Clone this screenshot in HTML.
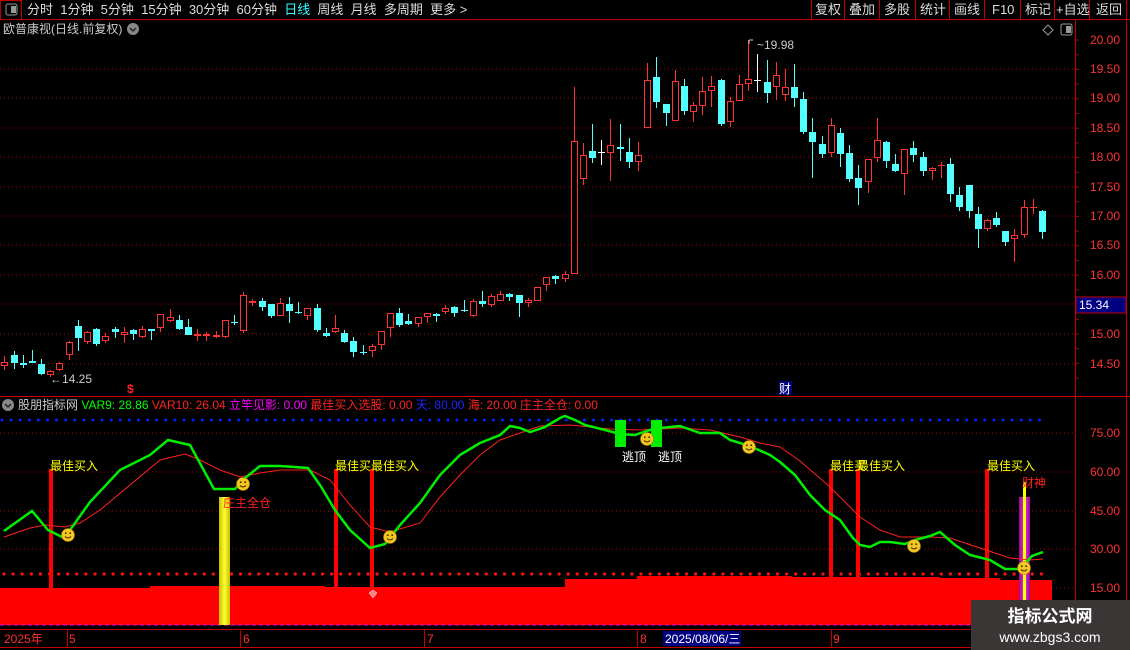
<!DOCTYPE html>
<html><head><meta charset="utf-8"><style>
html,body{margin:0;padding:0;background:#000;width:1130px;height:650px;overflow:hidden;font-family:"Liberation Sans","Noto Sans CJK SC",sans-serif;}
#c{position:absolute;left:0;top:0;}
.t{position:absolute;font-size:12px;white-space:nowrap;line-height:14px;}
</style></head><body>
<svg id="c" width="1130" height="650" xmlns="http://www.w3.org/2000/svg" font-family="Liberation Sans, Noto Sans CJK SC, sans-serif">
<line x1="0" y1="19.5" x2="1130" y2="19.5" stroke="#c00000"/>
<rect x="0.5" y="0.5" width="21" height="19" fill="none" stroke="#c00000"/>
<rect x="6" y="4" width="11" height="11" rx="2" fill="none" stroke="#999"/><rect x="11" y="6" width="5" height="7" fill="#999"/>
<g stroke="#c00000"><line x1="811.5" y1="0" x2="811.5" y2="19"/><line x1="844.5" y1="0" x2="844.5" y2="19"/><line x1="879.5" y1="0" x2="879.5" y2="19"/><line x1="915.5" y1="0" x2="915.5" y2="19"/><line x1="949.5" y1="0" x2="949.5" y2="19"/><line x1="984.5" y1="0" x2="984.5" y2="19"/><line x1="1020.5" y1="0" x2="1020.5" y2="19"/><line x1="1054.5" y1="0" x2="1054.5" y2="19"/><line x1="1089.5" y1="0" x2="1089.5" y2="19"/><line x1="1126.5" y1="0" x2="1126.5" y2="19"/></g>
<line x1="1075.5" y1="19" x2="1075.5" y2="630" stroke="#c00000"/>
<line x1="1126.5" y1="19" x2="1126.5" y2="650" stroke="#c00000"/>
<line x1="0" y1="396.5" x2="1130" y2="396.5" stroke="#d00000"/>
<line x1="0" y1="629.5" x2="1130" y2="629.5" stroke="#c00000"/>
<line x1="0" y1="647.5" x2="1130" y2="647.5" stroke="#c00000"/>
<g stroke="#a00000" stroke-dasharray="1 3">
<line x1="0" y1="69" x2="1074" y2="69"/><line x1="0" y1="98" x2="1074" y2="98"/><line x1="0" y1="128" x2="1074" y2="128"/><line x1="0" y1="157" x2="1074" y2="157"/><line x1="0" y1="187" x2="1074" y2="187"/><line x1="0" y1="216" x2="1074" y2="216"/><line x1="0" y1="245" x2="1074" y2="245"/><line x1="0" y1="275" x2="1074" y2="275"/><line x1="0" y1="304" x2="1074" y2="304"/><line x1="0" y1="334" x2="1074" y2="334"/><line x1="0" y1="364" x2="1074" y2="364"/>
<line x1="0" y1="433" x2="1074" y2="433"/><line x1="0" y1="472" x2="1074" y2="472"/><line x1="0" y1="511" x2="1074" y2="511"/><line x1="0" y1="549" x2="1074" y2="549"/><line x1="0" y1="588" x2="1074" y2="588"/>
</g>
<g stroke="#c00000" id="ticks"></g>
<g fill="#ff3333" font-size="12" text-anchor="end">
<text x="1120" y="44">20.00</text><text x="1120" y="73">19.50</text><text x="1120" y="102">19.00</text><text x="1120" y="132">18.50</text><text x="1120" y="161">18.00</text><text x="1120" y="191">17.50</text><text x="1120" y="220">17.00</text><text x="1120" y="249">16.50</text><text x="1120" y="279">16.00</text><text x="1120" y="308">15.50</text><text x="1120" y="338">15.00</text><text x="1120" y="368">14.50</text>
<text x="1120" y="437">75.00</text><text x="1120" y="476">60.00</text><text x="1120" y="515">45.00</text><text x="1120" y="553">30.00</text><text x="1120" y="592">15.00</text>
</g>
<rect x="1076" y="297" width="50" height="16" fill="#000080" stroke="#c00000"/>
<text x="1079" y="309" fill="#fff" font-size="12">15.34</text>
<g id="candles"></g>
<text x="757" y="49" fill="#ccc" font-size="12">~19.98</text>
<path d="M749 40 v4 M749 40 h4" stroke="#ccc" fill="none"/>
<text x="50" y="383" fill="#ccc" font-size="12">←14.25</text>
<text x="127" y="393" fill="#ff2020" font-size="12" font-weight="bold">$</text>
<rect x="779" y="381" width="13" height="14" fill="#000080"/>
<text x="779" y="393" fill="#fff" font-size="12">财</text>
<path d="M1048 25 l5 5 -5 5 -5 -5z" fill="none" stroke="#999"/>
<rect x="1061" y="24" width="11" height="11" rx="2" fill="none" stroke="#999"/><rect x="1066" y="26" width="5" height="7" fill="#999"/>
<circle cx="133" cy="29" r="6" fill="#888"/><path d="M130 28 l3 3 3 -3" stroke="#222" fill="none" stroke-width="1.5"/>
<circle cx="8" cy="405" r="6" fill="#888"/><path d="M5 404 l3 3 3 -3" stroke="#222" fill="none" stroke-width="1.5"/>

<g id="bdots" fill="#0022ff"></g>
<g id="rdots" fill="#ff1010"></g>
<path d="M0 588 H150 V586 H325 V587 H565 V579 H637 V576 H792 V577 H940 V578 H1000 V580 H1052 V625 H0Z" fill="#ff0000"/>
<line x1="0" y1="625" x2="1052" y2="625" stroke="#ff00ff" stroke-dasharray="4 3"/>
<defs><linearGradient id="yg" x1="0" x2="1"><stop offset="0" stop-color="#c8c000"/><stop offset=".5" stop-color="#ffff30"/><stop offset="1" stop-color="#c8c000"/></linearGradient>
<linearGradient id="pg" x1="0" x2="1"><stop offset="0" stop-color="#a000a0"/><stop offset=".5" stop-color="#d040d0"/><stop offset="1" stop-color="#a000a0"/></linearGradient></defs>
<rect x="219" y="497" width="11" height="128" fill="url(#yg)"/>
<rect x="1019" y="497" width="11" height="128" fill="url(#pg)"/>
<rect x="1023" y="482" width="3" height="143" fill="#ffff00"/>
<g fill="#ff0000"><rect x="49" y="469" width="4" height="119"/><rect x="334" y="469" width="4" height="119"/><rect x="370" y="469" width="4" height="128"/><rect x="829" y="469" width="4" height="119"/><rect x="856" y="469" width="4" height="119"/><rect x="985" y="469" width="4" height="119"/></g>
<polyline fill="none" stroke="#ff2020" stroke-width="1" points="4,537 30,528 45,525 65,527 80,523 100,510 130,485 160,460 185,454 200,460 220,470 240,477 260,473 280,470 310,470 330,480 350,505 370,527 390,532 420,523 440,497 460,475 480,455 500,440 520,433 540,426 570,425 610,429 640,430 680,428 710,430 740,437 760,443 780,447 800,461 830,487 860,517 880,530 900,537 930,537 950,538 980,548 1010,558 1030,560 1043,559"/>
<polyline fill="none" stroke="#00ee00" stroke-width="2.5" points="4,531 32,511 48,530 62,537 70,530 90,502 120,470 150,455 168,440 190,445 214,489 235,489 245,478 260,466 280,466 308,468 320,485 335,510 350,530 370,548 385,544 400,525 420,503 440,475 460,455 480,443 500,435 510,426 520,428 530,432 545,427 560,418 565,416 575,420 585,425 605,430 620,434 635,435 650,430 660,428 680,426 700,433 720,433 730,440 750,446 770,455 780,462 795,475 810,495 825,510 840,520 853,538 860,545 870,547 880,542 890,542 905,544 915,540 930,536 940,532 955,545 970,555 990,560 1005,569 1020,569 1032,556 1043,552"/>
<rect x="615" y="420" width="11" height="27" fill="#00ee00"/><rect x="651" y="420" width="11" height="27" fill="#00ee00"/>
<g id="smiles"></g>
<path d="M369 593 l4 -3 4 3 -4 5z" fill="#ff8080" stroke="#fff" stroke-width=".5"/>
<g font-size="12">
<text x="50" y="470" fill="#ffff00">最佳买入</text>
<text x="335" y="470" fill="#ffff00">最佳买</text><text x="371" y="470" fill="#ffff00">最佳买入</text>
<text x="830" y="470" fill="#ffff00">最佳买</text><text x="857" y="470" fill="#ffff00">最佳买入</text>
<text x="987" y="470" fill="#ffff00">最佳买入</text>
<text x="223" y="507" fill="#ff2020">庄主全仓</text>
<text x="1022" y="487" fill="#ff2020">财神</text>
<text x="622" y="461" fill="#fff">逃顶</text><text x="658" y="461" fill="#fff">逃顶</text>
</g>
<g stroke="#c00000"><line x1="67.5" y1="630" x2="67.5" y2="647"/><line x1="240.5" y1="630" x2="240.5" y2="647"/><line x1="424.5" y1="630" x2="424.5" y2="647"/><line x1="637.5" y1="630" x2="637.5" y2="647"/><line x1="831.5" y1="630" x2="831.5" y2="647"/></g>
<g fill="#ff3030" font-size="12"><text x="4" y="643">2025年</text><text x="69" y="643">5</text><text x="243" y="643">6</text><text x="427" y="643">7</text><text x="640" y="643">8</text><text x="833" y="643">9</text></g>
<rect x="663" y="631" width="78" height="15" fill="#000080"/>
<text x="665" y="643" fill="#fff" font-size="12">2025/08/06/三</text>
<rect x="971" y="600" width="159" height="50" fill="#3b3636"/>
<text x="1050" y="622" fill="#fff" font-size="17" font-weight="bold" text-anchor="middle">指标公式网</text>
<text x="1050" y="642" fill="#fff" font-size="14" text-anchor="middle">www.zbgs3.com</text>
</svg>
<div class="t" style="left:27px;top:3px;color:#ddd;font-size:13px;">分时&nbsp; 1分钟&nbsp; 5分钟&nbsp; 15分钟&nbsp; 30分钟&nbsp; 60分钟&nbsp; <span style="color:#3ff">日线</span>&nbsp; 周线&nbsp; 月线&nbsp; 多周期&nbsp; 更多 &gt;</div>
<div class="t" style="left:814px;top:3px;color:#ddd;font-size:13px;"><span style="position:absolute;left:1px">复权</span><span style="position:absolute;left:35px">叠加</span><span style="position:absolute;left:70px">多股</span><span style="position:absolute;left:106px">统计</span><span style="position:absolute;left:140px">画线</span><span style="position:absolute;left:178px">F10</span><span style="position:absolute;left:211px">标记</span><span style="position:absolute;left:242px">+自选</span><span style="position:absolute;left:282px">返回</span></div>
<div class="t" style="left:3px;top:22px;color:#ccc;font-size:12px;">欧普康视(日线.前复权)</div>
<div class="t" style="left:18px;top:398px;color:#ccc;font-size:12px;">股朋指标网 <span style="color:#0f0">VAR9: 28.86</span> <span style="color:#f22">VAR10: 26.04</span> <span style="color:#f0f">立竿见影: 0.00</span> <span style="color:#f22">最佳买入选股: 0.00</span> <span style="color:#22f">天: 80.00</span> <span style="color:#f22">海: 20.00</span> <span style="color:#f22">庄主全仓: 0.00</span></div>
<script>
var NS="http://www.w3.org/2000/svg";
function el(p,t,a){var e=document.createElementNS(NS,t);for(var k in a)e.setAttribute(k,a[k]);p.appendChild(e);return e;}
var D=[
['r',362,366,356,370],['c',355,363,351,369],['c',363,365,355,368],['c',361,363,350,363],['c',364,374,359,375],['r',371,375,370,377],['r',363,370,362,371],['r',342,355,341,360],['c',326,338,320,351],['r',332,342,331,344],
['c',329,344,328,346],['r',336,341,333,343],['c',329,332,327,338],['r',332,335,327,343],['c',330,334,329,340],['r',329,337,326,338],['c',329,331,329,340],['r',314,328,314,332],['r',317,321,309,322],['c',320,329,315,330],
['c',327,335,319,335],['r',334,336,329,341],['r',334,336,332,341],['r',335,337,331,338],['r',320,337,320,338],['c',322,323,315,325],['r',295,331,292,333],['r',301,303,299,306],['c',301,307,298,311],['c',304,316,304,318],
['r',303,316,298,316],['c',304,311,297,323],['c',312,313,302,314],['r',308,316,308,320],['c',308,330,304,332],['c',333,336,328,337],['r',328,332,315,333],['c',333,342,330,343],['c',341,352,337,357],['c',352,353,345,355],
['r',346,351,344,357],['r',331,345,331,350],['r',313,328,313,337],['c',313,325,308,327],['c',321,324,314,325],['r',317,324,317,327],['r',313,317,313,323],['c',314,316,313,322],['r',308,312,305,314],['c',307,313,306,317],
['c',310,311,300,312],['r',301,316,299,317],['c',301,304,291,307],['r',296,305,294,307],['r',294,301,291,301],['c',294,297,293,301],['c',295,303,295,317],['r',300,303,298,307],['r',287,301,287,301],['r',277,285,277,291],
['c',276,279,275,284],['r',274,279,271,282],['r',141,274,87,274],['r',155,179,143,185],['c',151,158,124,163],['w',152,153,140,165],['r',145,153,119,181],
['c',147,149,124,161],['c',152,162,138,168],['r',155,162,142,171],['r',80,128,63,128],['c',77,102,57,108],['c',104,113,104,126],['r',81,121,70,121],['c',86,111,79,115],['r',105,112,102,122],['r',91,106,77,115],
['r',86,91,76,107],['c',80,124,79,126],['r',101,122,97,127],['r',84,101,75,101],['r',79,84,40,91],['w',80,81,54,92],['c',82,93,60,103],['r',75,87,62,100],['r',87,95,69,101],['c',87,98,64,107],
['c',99,132,92,134],['c',132,142,118,178],['c',144,154,136,158],['r',125,153,118,157],['c',133,154,128,167],['c',153,179,145,182],['c',178,188,165,205],['r',159,182,159,193],['r',140,158,118,162],['c',142,161,141,168],
['c',164,171,154,172],['r',149,174,149,195],['c',148,155,141,162],['c',157,171,152,176],['r',168,171,167,180],['r',165,166,162,178],['c',164,194,158,202],['c',195,207,187,211],['c',185,211,185,218],['c',214,229,207,248],
['r',220,229,219,231],['c',218,225,212,227],['c',231,242,231,246],['r',235,239,229,262],['r',207,235,200,238],['r',207,208,199,214],['c',211,232,210,239]];
var g=document.getElementById('candles');
var N=D.length, x0=4.4, dx=(1042-4.4)/(N-1);
for(var i=0;i<N;i++){var d=D[i],x=Math.round(x0+i*dx)+0.5;
 var col=d[0]=='r'?'#ff3232':(d[0]=='c'?'#54ffff':'#ffffff');
 var h=Math.max(1,d[2]-d[1]);
 el(g,'line',{x1:x,y1:d[3],x2:x,y2:d[1],stroke:col});
 el(g,'line',{x1:x,y1:d[1]+h,x2:x,y2:Math.max(d[4],d[1]+h),stroke:col});
 if(d[0]=='r'&&h>2) el(g,'rect',{x:x-3,y:d[1]+.5,width:6,height:h-1,fill:'#000',stroke:col});
 else el(g,'rect',{x:x-3.5,y:d[1],width:7,height:h,fill:col});
}
var b=document.getElementById('bdots');for(var x=2;x<1046;x+=9.1)el(b,'circle',{cx:x,cy:420,r:1.5});
var r=document.getElementById('rdots');for(var x=4;x<1046;x+=9.1)el(r,'circle',{cx:x,cy:574,r:1.6});
var s=document.getElementById('smiles');[[68,535],[243,484],[390,537],[647,439],[749,447],[914,546],[1024,568]].forEach(function(p){
 el(s,'circle',{cx:p[0],cy:p[1],r:6.5,fill:'#f2c820',stroke:'#b08000','stroke-width':.6});
 el(s,'circle',{cx:p[0]-2.2,cy:p[1]-1.8,r:.9,fill:'#402000'});el(s,'circle',{cx:p[0]+2.2,cy:p[1]-1.8,r:.9,fill:'#402000'});
 el(s,'path',{d:'M'+(p[0]-3)+' '+(p[1]+1.5)+' q3 3 6 0',stroke:'#402000',fill:'none','stroke-width':1});
});
var t=document.getElementById('ticks');for(var y=40;y<392;y+=14.7)el(t,'line',{x1:1075,y1:y,x2:1079,y2:y});
</script>
</body></html>
